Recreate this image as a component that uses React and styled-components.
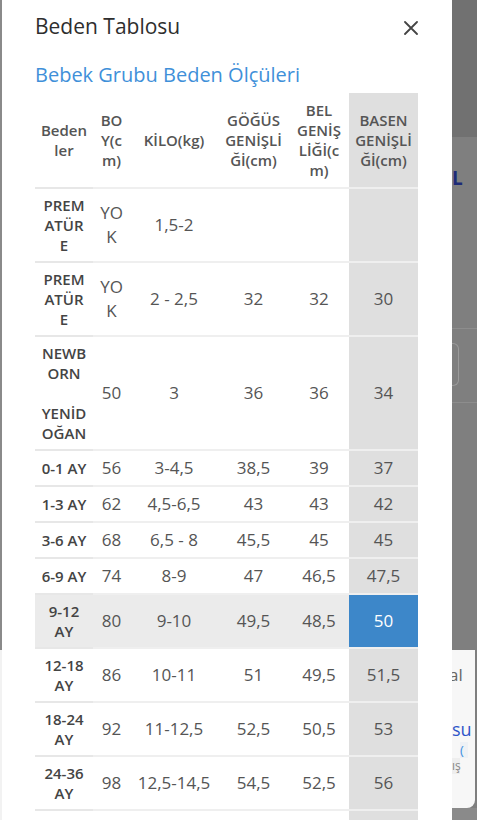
import React from "react";
import styled, { createGlobalStyle } from "styled-components";

const Global = createGlobalStyle`
  html, body { margin: 0; padding: 0; }
  body { font-family: "Open Sans", "Noto Sans", sans-serif; background: #7e7e7e; }
`;

const Page = styled.div`
  display: flex;
  width: 477px;
  height: 820px;
  overflow: hidden;
  background: #7e7e7e;
`;

const LeftEdge = styled.div`
  width: 2px;
  flex-shrink: 0;
  display: flex;
  flex-direction: column;
`;

const EdgePart = styled.div`
  height: ${(p) => p.$h};
  flex: ${(p) => (p.$grow ? 1 : "none")};
  background: ${(p) => p.$c};
`;

const Modal = styled.div`
  width: 450px;
  flex-shrink: 0;
  box-sizing: border-box;
  background: #fff;
  padding: 12px 34px 0 33px;
`;

const Header = styled.div`
  display: flex;
  align-items: center;
  justify-content: space-between;
  height: 28px;
`;

const Title = styled.h1`
  margin: 0;
  font-size: 21px;
  line-height: 28px;
  font-weight: 400;
  color: #2e2e2e;
`;

const CloseButton = styled.button`
  width: 16px;
  height: 16px;
  margin-top: 4px;
  padding: 0;
  border: 0;
  background: none;
  display: flex;
  align-items: center;
  justify-content: flex-end;
  cursor: pointer;
`;

const Subtitle = styled.h2`
  margin: 21px 0 4px;
  font-size: 20px;
  line-height: 28px;
  font-weight: 400;
  color: #3f90d9;
`;

const Table = styled.table`
  width: 383px;
  table-layout: fixed;
  border-collapse: separate;
  border-spacing: 0;
`;

const HeadCell = styled.th`
  padding: 7px 0;
  font-size: 15px;
  line-height: 20px;
  font-weight: 600;
  color: #555;
  text-align: center;
  vertical-align: middle;
  background: ${(p) => (p.$shade ? "#dfdfdf" : "#fff")};
`;

const SizeCell = styled.th`
  padding: 6px 0;
  border-top: 2px solid #e7e7e7;
  font-size: 15px;
  line-height: 20px;
  font-weight: 600;
  color: #444;
  text-align: center;
  vertical-align: middle;
  background: ${(p) => (p.$active ? "#ebebeb" : "#fff")};
`;

const cellBg = {
  plain: "#fff",
  shade: "#dfdfdf",
  active: "#ebebeb",
  accent: "#3d87c9",
};

const ValueCell = styled.td`
  padding: 6px 0;
  border-top: 2px solid #efefef;
  font-size: 17px;
  line-height: ${(p) => (p.$multi ? "24px" : "22px")};
  font-weight: 400;
  color: ${(p) => (p.$variant === "accent" ? "#fff" : "#555")};
  text-align: center;
  vertical-align: middle;
  white-space: nowrap;
  background: ${(p) => cellBg[p.$variant]};
`;

const RightStrip = styled.div`
  width: 25px;
  flex-shrink: 0;
  display: flex;
  flex-direction: column;
  background: #7f7f7f;
  overflow: hidden;
`;

const Block = styled.div`
  height: ${(p) => p.$h}px;
  flex-shrink: 0;
  box-sizing: border-box;
  background: ${(p) => p.$bg || "transparent"};
`;

const Brand = styled.div`
  height: 191px;
  flex-shrink: 0;
  box-sizing: border-box;
  padding-top: 31px;
  font-size: 19px;
  line-height: 20px;
  font-weight: 700;
  color: #1d2b78;
`;

const Rule = styled.div`
  height: 1px;
  flex-shrink: 0;
  background: #8d8d8d;
`;

const GhostBox = styled.div`
  width: 7px;
  height: 43px;
  flex-shrink: 0;
  box-sizing: border-box;
  border: 1px solid #9b9b9b;
  border-left: none;
  border-radius: 0 6px 6px 0;
`;

const Card = styled.div`
  height: 158px;
  flex-shrink: 0;
  box-sizing: border-box;
  width: 23px;
  background: #f7f7f7;
  border-radius: 0 0 8px 0;
  padding-top: 10px;
  display: flex;
  flex-direction: column;
  overflow: hidden;
`;

const CardText = styled.span`
  display: block;
  font-size: ${(p) => p.$size}px;
  line-height: ${(p) => p.$lh}px;
  margin-top: ${(p) => p.$mt}px;
  margin-left: ${(p) => p.$ml}px;
  color: ${(p) => p.$color};
  background: ${(p) => p.$bg || "transparent"};
  width: ${(p) => (p.$bg ? "8px" : "auto")};
  white-space: nowrap;
`;

const Filler = styled.div`
  flex: 1;
  background: ${(p) => p.$bg};
`;

const Lines = ({ value }) => {
  const arr = Array.isArray(value) ? value : [value];
  return arr.map((l, i) => (
    <React.Fragment key={i}>
      {i > 0 && <br />}
      {l}
    </React.Fragment>
  ));
};

const columns = [58, 37, 88, 71, 60, 69];

const head = [
  ["Beden", "ler"],
  ["BO", "Y(c", "m)"],
  ["KİLO(kg)"],
  ["GÖĞÜS", "GENİŞLİ", "Ğİ(cm)"],
  ["BEL", "GENİŞ", "LİĞİ(c", "m)"],
  ["BASEN", "GENİŞLİ", "Ğİ(cm)"],
];

const rows = [
  { size: ["PREM", "ATÜR", "E"], vals: [["YO", "K"], "1,5-2", "", "", ""] },
  { size: ["PREM", "ATÜR", "E"], vals: [["YO", "K"], "2 - 2,5", "32", "32", "30"] },
  { size: ["NEWB", "ORN", "\u00a0", "YENİD", "OĞAN"], vals: ["50", "3", "36", "36", "34"] },
  { size: ["0-1 AY"], vals: ["56", "3-4,5", "38,5", "39", "37"] },
  { size: ["1-3 AY"], vals: ["62", "4,5-6,5", "43", "43", "42"] },
  { size: ["3-6 AY"], vals: ["68", "6,5 - 8", "45,5", "45", "45"] },
  { size: ["6-9 AY"], vals: ["74", "8-9", "47", "46,5", "47,5"] },
  { size: ["9-12", "AY"], vals: ["80", "9-10", "49,5", "48,5", "50"], active: true },
  { size: ["12-18", "AY"], vals: ["86", "10-11", "51", "49,5", "51,5"] },
  { size: ["18-24", "AY"], vals: ["92", "11-12,5", "52,5", "50,5", "53"] },
  { size: ["24-36", "AY"], vals: ["98", "12,5-14,5", "54,5", "52,5", "56"] },
  { size: ["36-48", "AY"], vals: [["10", "4"], "14,5-16,5", "56,5", "54,5", "58"] },
];

const variantFor = (row, idx, count) => {
  const last = idx === count - 1;
  if (row.active) return last ? "accent" : "active";
  return last ? "shade" : "plain";
};

export default function App() {
  return (
    <>
      <Global />
      <Page>
        <LeftEdge>
          <EdgePart $h="650px" $c="#8a8a8a" />
          <EdgePart $grow $c="#f2f2f2" />
        </LeftEdge>
        <Modal>
          <Header>
            <Title>Beden Tablosu</Title>
            <CloseButton aria-label="Kapat">
              <svg width="14" height="14" viewBox="0 0 14 14">
                <path d="M1 1 L13 13 M13 1 L1 13" stroke="#444" strokeWidth="1.8" strokeLinecap="round" />
              </svg>
            </CloseButton>
          </Header>
          <Subtitle>Bebek Grubu Beden Ölçüleri</Subtitle>
          <Table>
            <colgroup>
              {columns.map((w, i) => (
                <col key={i} style={{ width: w }} />
              ))}
            </colgroup>
            <thead>
              <tr>
                {head.map((h, i) => (
                  <HeadCell key={i} $shade={i === head.length - 1}>
                    <Lines value={h} />
                  </HeadCell>
                ))}
              </tr>
            </thead>
            <tbody>
              {rows.map((r, ri) => (
                <tr key={ri}>
                  <SizeCell scope="row" $active={r.active}>
                    <Lines value={r.size} />
                  </SizeCell>
                  {r.vals.map((v, vi) => (
                    <ValueCell
                      key={vi}
                      $multi={Array.isArray(v)}
                      $variant={variantFor(r, vi, r.vals.length)}
                    >
                      <Lines value={v} />
                    </ValueCell>
                  ))}
                </tr>
              ))}
            </tbody>
          </Table>
        </Modal>
        <RightStrip>
          <Block $h={137} $bg="#717171" />
          <Brand>L</Brand>
          <Rule />
          <Block $h={14} />
          <GhostBox />
          <Block $h={16} />
          <Rule />
          <Block $h={247} />
          <Card>
            <CardText $size={17} $lh={22} $mt={4} $ml={-3} $color="#666">al</CardText>
            <CardText $size={18} $lh={22} $mt={32} $ml={0} $color="#2f55c9">su</CardText>
            <CardText $size={13} $lh={16} $mt={2} $ml={8} $color="#3c8fe0" $bg="#eef1f5">(</CardText>
            <CardText $size={12} $lh={16} $mt={0} $ml={0} $color="#888" $bg="#eeeeee">ış</CardText>
          </Card>
          <Filler $bg="#8a8a8a" />
        </RightStrip>
      </Page>
    </>
  );
}
